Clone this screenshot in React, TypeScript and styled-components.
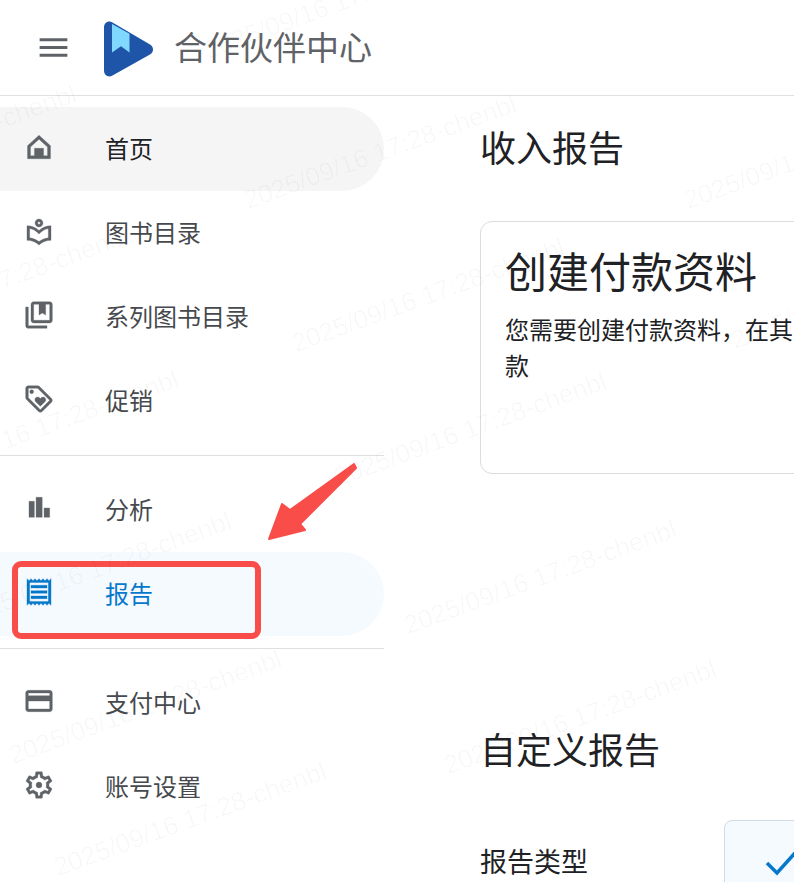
import React from "react"
import styled, { createGlobalStyle } from "styled-components"

const GlobalStyle = createGlobalStyle`
    html, body {
        margin: 0;
        padding: 0;
        background: #fff;
        font-family: "Liberation Sans", "Noto Sans CJK SC", sans-serif;
    }
`;

const Page = styled.div`
    position: relative;
    width: 794px;
    height: 882px;
    overflow: hidden;
    background: #fff;
    color: #202124;
`;

const Header = styled.header`
    height: 95px;
    display: flex;
    align-items: center;
    border-bottom: 1px solid #dfe1e3;
`;

const MenuButton = styled.svg`
    width: 37px;
    height: 37px;
    margin: 0 32px 0 35px;
    fill: #5f6368;
`;

const Logo = styled.svg`
    width: 50px;
    height: 56px;
    margin: 3px 20px 0 0;
`;

const ProductName = styled.div`
    margin-top: 2px;
    font-size: 33px;
    line-height: 40px;
    color: #5f6368;
`;

const Body = styled.div`
    display: flex;
`;

const Sidebar = styled.nav`
    flex: none;
    width: 384px;
    padding-top: 11px;
`;

const NavItem = styled.div<{ $state?: "home" | "active" }>`
    height: 84px;
    box-sizing: border-box;
    padding-bottom: 4px;
    display: flex;
    align-items: center;
    border-radius: 0 42px 42px 0;
    font-size: 24px;
    background: ${(p) => (p.$state === "home" ? "#f5f5f5" : p.$state === "active" ? "#f5faff" : "transparent")};
    color: ${(p) => (p.$state === "home" ? "#202124" : p.$state === "active" ? "#0678cc" : "#46494d")};
`;

const NavIcon = styled.svg<{ $active?: boolean }>`
    flex: none;
    width: 32px;
    height: 32px;
    margin: 0 50px 0 23px;
    fill: ${(p) => (p.$active ? "#0678cc" : "#5f6368")};
    stroke: ${(p) => (p.$active ? "#0678cc" : "#5f6368")};
    stroke-width: 0.25;
`;

const Divider = styled.div`
    height: 1px;
    margin: 12px 0;
    background: #e0e0e0;
`;

const Main = styled.main`
    flex: 1;
    min-width: 0;
    padding: 32px 0 0 96px;
`;

const PageTitle = styled.h1`
    margin: 0;
    height: 44px;
    font-size: 36px;
    line-height: 44px;
    font-weight: 400;
    white-space: nowrap;
`;

const Card = styled.section`
    width: 420px;
    height: 253px;
    box-sizing: border-box;
    margin-top: 49px;
    padding: 24px 24px;
    border: 1px solid #dadce0;
    border-radius: 12px;
`;

const CardTitle = styled.h2`
    margin: 0 0 11px;
    font-size: 42px;
    line-height: 56px;
    font-weight: 400;
    white-space: nowrap;
`;

const CardText = styled.p`
    margin: 0;
    width: 390px;
    font-size: 24px;
    line-height: 36px;
    color: #202124;
`;

const SectionTitle = styled(PageTitle)`
    margin-top: 256px;
`;

const FieldRow = styled.div`
    display: flex;
    align-items: flex-start;
    margin-top: 46px;
`;

const FieldLabel = styled.div`
    flex: none;
    width: 244px;
    padding-top: 25px;
    font-size: 27px;
    line-height: 36px;
    white-space: nowrap;
`;

const ChoiceBox = styled.div`
    width: 200px;
    height: 120px;
    flex: none;
    display: flex;
    padding: 26px 0 0 40px;
    box-sizing: border-box;
    background: #f5faff;
    border: 1px solid #cfdce8;
    border-radius: 8px 0 0 0;
`;

const CheckIcon = styled.svg`
    width: 32px;
    height: 32px;
    fill: none;
    stroke: #0678cc;
    stroke-width: 3.5;
`;

const Highlight = styled.div`
    position: absolute;
    left: 12px;
    top: 561px;
    width: 249px;
    height: 78px;
    box-sizing: border-box;
    border: 6px solid #f94d4a;
    border-radius: 9px;
`;

const Arrow = styled.svg`
    position: absolute;
    left: 260px;
    top: 455px;
    width: 104px;
    height: 92px;
    fill: #f94d4a;
    stroke: #f94d4a;
    stroke-width: 2;
    stroke-linejoin: round;
`;

const WatermarkLayer = styled.div`
    position: absolute;
    inset: 0;
    pointer-events: none;
`;

const Watermark = styled.span`
    position: absolute;
    font-size: 26px;
    line-height: 30px;
    white-space: nowrap;
    color: rgba(0, 0, 0, 0.03);
    transform: rotate(-20deg);
    transform-origin: left bottom;
`;

const watermarks = [
    [210, 65], [-190, 205], [250, 215], [-138, 347], [298, 358], [-88, 490], [340, 492],
    [-35, 632], [410, 640], [15, 770], [450, 780], [60, 882], [690, 215], [737, 355],
]

const navGroups = [
    [
        {
            label: "首页",
            state: "home" as const,
            path: "M12 3.2 3.4 11v9.8h17.2V11L12 3.2zm6.4 15.4h-3V13H8.6v5.6h-3v-6.6L12 6.2l6.4 5.800v6.600z",
        },
        {
            label: "图书目录",
            path: "M12 9c1.66 0 3-1.34 3-3s-1.34-3-3-3-3 1.34-3 3 1.34 3 3 3zm0-4c.55 0 1 .45 1 1s-.45 1-1 1-1-.45-1-1 .45-1 1-1zm0 6.55C9.64 9.35 6.48 8 3 8v11c3.48 0 6.64 1.35 9 3.55 2.36-2.19 5.52-3.55 9-3.55V8c-3.48 0-6.64 1.35-9 3.55zm7 5.58c-2.53.34-4.93 1.3-7 2.82-2.06-1.52-4.47-2.49-7-2.83v-6.95c2.1.38 4.05 1.35 5.64 2.83L12 14.28l1.36-1.28c1.59-1.48 3.54-2.45 5.64-2.83v6.96z",
        },
        {
            label: "系列图书目录",
            path: "M4 6H2v14c0 1.1.9 2 2 2h14v-2H4V6zM20 2H8c-1.1 0-2 .9-2 2v12c0 1.1.9 2 2 2h12c1.1 0 2-.9 2-2V4c0-1.1-.9-2-2-2zm0 14H8V4h4v8l2.5-1.5L17 12V4h3v12z",
        },
        {
            label: "促销",
            path: "M21.41 11.58l-9-9C12.05 2.22 11.55 2 11 2H4c-1.1 0-2 .9-2 2v7c0 .55.22 1.05.59 1.42l9 9c.36.36.86.58 1.41.58s1.05-.22 1.41-.59l7-7c.37-.36.59-.86.59-1.41s-.23-1.06-.59-1.42zM13 20.01L4 11V4h7v-.01l9 9-7 7.02zM6.5 5A1.5 1.5 0 1 0 6.5 8 1.5 1.5 0 1 0 6.5 5zM8.9 12.55c0 .57.23 1.07.6 1.45l3.5 3.5 3.5-3.5c.37-.37.6-.89.6-1.45 0-1.13-.92-2.05-2.05-2.05-.57 0-1.08.23-1.45.6l-.6.6-.6-.59c-.37-.38-.89-.61-1.45-.61-1.13 0-2.05.92-2.05 2.05z",
        },
    ],
    [
        {
            label: "分析",
            path: "M4.500 7h4v12h-4zM9.800 4h4.600v15H9.800zM15.800 12H20v7h-4.200z",
        },
        {
            label: "报告",
            state: "active" as const,
            path: "M19.5 3.5L18 2l-1.5 1.5L15 2l-1.5 1.5L12 2l-1.5 1.5L9 2 7.5 3.5 6 2 4.5 3.5 3 2v20l1.5-1.5L6 22l1.5-1.5L9 22l1.5-1.5L12 22l1.5-1.5L15 22l1.5-1.5L18 22l1.5-1.5L21 22V2l-1.5 1.5zM19 19.09H5V4.91h14v14.18zM6 15h12v2H6zm0-4h12v2H6zm0-4h12v2H6z",
        },
    ],
    [
        {
            label: "支付中心",
            path: "M20 4H4c-1.11 0-1.99.89-1.99 2L2 18c0 1.11.89 2 2 2h16c1.11 0 2-.89 2-2V6c0-1.11-.89-2-2-2zm0 14H4v-6h16v6zm0-10H4V6h16v2z",
        },
        {
            label: "账号设置",
            path: "M19.43 12.98c.04-.32.07-.64.07-.98 0-.34-.03-.66-.07-.98l2.11-1.65c.19-.15.24-.42.12-.64l-2-3.46c-.09-.16-.26-.25-.44-.25-.06 0-.12.01-.17.03l-2.49 1c-.52-.4-1.08-.73-1.69-.98l-.38-2.65C14.46 2.18 14.25 2 14 2h-4c-.25 0-.46.18-.49.42l-.38 2.65c-.61.25-1.17.59-1.69.98l-2.49-1c-.06-.02-.12-.03-.18-.03-.17 0-.34.09-.43.25l-2 3.46c-.13.22-.07.49.12.64l2.11 1.65c-.04.32-.07.65-.07.98 0 .33.03.66.07.98l-2.11 1.65c-.19.15-.24.42-.12.64l2 3.46c.09.16.26.25.44.25.06 0 .12-.01.17-.03l2.49-1c.52.4 1.08.73 1.69.98l.38 2.65c.03.24.24.42.49.42h4c.25 0 .46-.18.49-.42l.38-2.65c.61-.25 1.17-.59 1.69-.98l2.49 1c.06.02.12.03.18.03.17 0 .34-.09.43-.25l2-3.46c.12-.22.07-.49-.12-.64l-2.11-1.65zm-1.98-1.71c.04.31.05.52.05.73 0 .21-.02.43-.05.73l-.14 1.13.89.7 1.08.84-.7 1.21-1.27-.51-1.04-.42-.9.68c-.43.32-.84.56-1.25.73l-1.06.43-.16 1.13-.2 1.35h-1.4l-.19-1.35-.16-1.13-1.06-.43c-.43-.18-.83-.41-1.23-.71l-.91-.7-1.06.43-1.27.51-.7-1.21 1.08-.84.89-.7-.14-1.13c-.03-.31-.05-.54-.05-.74s.02-.43.05-.73l.14-1.13-.89-.7-1.08-.84.7-1.21 1.27.51 1.04.42.9-.68c.43-.32.84-.56 1.25-.73l1.06-.43.16-1.13.2-1.35h1.39l.19 1.35.16 1.13 1.06.43c.43.18.83.41 1.23.71l.91.7 1.06-.43 1.27-.51.7 1.21-1.07.85-.89.7.14 1.13zM12 9.8a2.2 2.2 0 1 0 0 4.4 2.2 2.2 0 1 0 0-4.4z",
        },
    ],
]

export default function App() {
    return (
        <Page>
            <GlobalStyle />
            <Header>
                <MenuButton viewBox="0 0 24 24">
                    <path d="M3 18h18v-2H3v2zm0-5h18v-2H3v2zm0-7v2h18V6H3z" />
                </MenuButton>
                <Logo viewBox="0 0 50 56">
                    <path
                        d="M0 6.5C0 1.5 4.5-.8 8.5 1.5L46 23.6c4 2.4 4 7.6 0 10L8.5 54.5C4.5 56.800 0 54.500 0 49.500z"
                        fill="#1e55a8"
                    />
                    <path d="M8 3 25.500 12.800V31.500L17 25.200 8 31.500z" fill="#80d8ff" />
                </Logo>
                <ProductName>合作伙伴中心</ProductName>
            </Header>
            <Body>
                <Sidebar>
                    {navGroups.map((group, i) => (
                        <React.Fragment key={i}>
                            {i > 0 ? <Divider /> : null}
                            {group.map((item) => (
                                <NavItem key={item.label} $state={item.state}>
                                    <NavIcon viewBox="0 0 24 24" $active={item.state === "active"}>
                                        <path d={item.path} />
                                    </NavIcon>
                                    {item.label}
                                </NavItem>
                            ))}
                        </React.Fragment>
                    ))}
                </Sidebar>
                <Main>
                    <PageTitle>收入报告</PageTitle>
                    <Card>
                        <CardTitle>创建付款资料</CardTitle>
                        <CardText>您需要创建付款资料，在其中输入付款</CardText>
                    </Card>
                    <SectionTitle>自定义报告</SectionTitle>
                    <FieldRow>
                        <FieldLabel>报告类型</FieldLabel>
                        <ChoiceBox>
                            <CheckIcon viewBox="0 0 32 32">
                                <path d="M2 16l10 10L30 6" />
                            </CheckIcon>
                        </ChoiceBox>
                    </FieldRow>
                </Main>
            </Body>
            <Highlight />
            <Arrow viewBox="260 455 104 92">
                <path d="M269 539 282 504 290 510 354 464 356 468 300 524 305 530z" />
            </Arrow>
            <WatermarkLayer>
                {watermarks.map(([x, y], i) => (
                    <Watermark key={i} style={{ left: x, top: y - 30 }}>
                        2025/09/16 17:28-chenbl
                    </Watermark>
                ))}
            </WatermarkLayer>
        </Page>
    )
}
